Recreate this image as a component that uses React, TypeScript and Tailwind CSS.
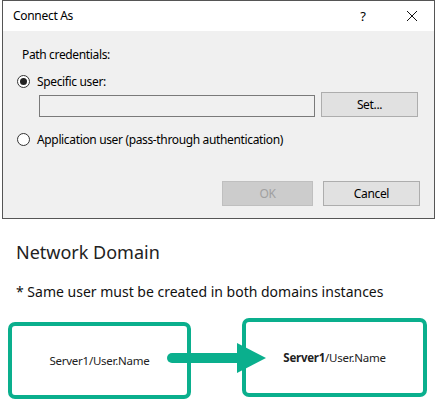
import React from "react";

const dlgFont = { fontFamily: '"Noto Sans", "Open Sans", sans-serif' };

function Radio({ checked }: { checked?: boolean }) {
  return (
    <span className="w-[13px] h-[13px] rounded-full border border-[#333] bg-white flex items-center justify-center shrink-0">
      {checked && <span className="w-[7px] h-[7px] rounded-full bg-[#222]" />}
    </span>
  );
}

export default function App() {
  return (
    <div className="w-[435px] h-[409px] bg-white overflow-hidden text-black" style={dlgFont}>
      {/* Dialog */}
      <div className="ml-[2px] w-[433px] h-[219px] border border-[#555] flex flex-col bg-[#f0f0f0]">
        <div className="h-[30px] bg-white flex items-center pl-[10px] text-[12px] leading-none tracking-[-0.3px]">
          <span className="flex-1">Connect As</span>
          <span className="w-[14px] text-center mr-[36px] text-[13px]">?</span>
          <svg width="12" height="12" viewBox="0 0 12 12" className="mr-[16px]">
            <path d="M1 1 L11 11 M11 1 L1 11" stroke="#111" strokeWidth="1" fill="none" />
          </svg>
        </div>
        <div className="flex-1 flex flex-col pl-[14px] pr-[14px] text-[12px] leading-none tracking-[-0.35px]">
          <div className="mt-[18px] pl-[5px]">Path credentials:</div>
          <div className="mt-[14px] flex items-center gap-[7px]">
            <Radio checked />
            <span>Specific user:</span>
          </div>
          <div className="mt-[4px] flex items-end gap-[6px] pl-[22px]">
            <div className="w-[276px] h-[22px] bg-[#f0f0f0] border border-[#7a7a7a]" />
            <div className="w-[97px] h-[25px] bg-[#e1e1e1] border border-[#adadad] flex items-center justify-center">
              Set...
            </div>
          </div>
          <div className="mt-[16px] flex items-center gap-[7px]">
            <Radio />
            <span>Application user (pass-through authentication)</span>
          </div>
          <div className="mt-[35px] flex justify-end gap-[10px]">
            <div className="w-[91px] h-[25px] bg-[#cccccc] border border-[#bfbfbf] text-[#a0a0a0] flex items-center justify-center">
              OK
            </div>
            <div className="w-[97px] h-[25px] bg-[#e1e1e1] border border-[#adadad] flex items-center justify-center">
              Cancel
            </div>
          </div>
        </div>
      </div>

      {/* Network section */}
      <div className="pl-[16px] mt-[24px] text-[18px] leading-none text-[#222]">Network Domain</div>
      <div className="pl-[16px] mt-[24px] text-[14px] leading-none text-[#111]">
        * Same user must be created in both domains instances
      </div>

      <div className="relative mt-[19px] flex items-start">
        <div className="ml-[8px] mt-[4px] w-[183px] h-[77px] border-[4px] border-[#0aaf8d] rounded-[7px] flex items-center justify-center text-[11.5px] tracking-[-0.25px] text-[#222]">
          Server1/User.Name
        </div>
        <div className="ml-[51px] w-[185px] h-[79px] border-[4px] border-[#0aaf8d] rounded-[7px] flex items-center justify-center text-[11.5px] tracking-[-0.25px] text-[#222]">
          <span>
            <b className="font-bold">Server1</b>/User.Name
          </span>
        </div>
        <svg className="absolute left-[165px] top-[24px]" width="104" height="34" viewBox="0 0 104 34">
          <path d="M7 16 L73 16" stroke="#0aaf8d" strokeWidth="10" strokeLinecap="round" />
          <path d="M72 1 L101 16 L72 31 Z" fill="#0aaf8d" />
        </svg>
      </div>
    </div>
  );
}
